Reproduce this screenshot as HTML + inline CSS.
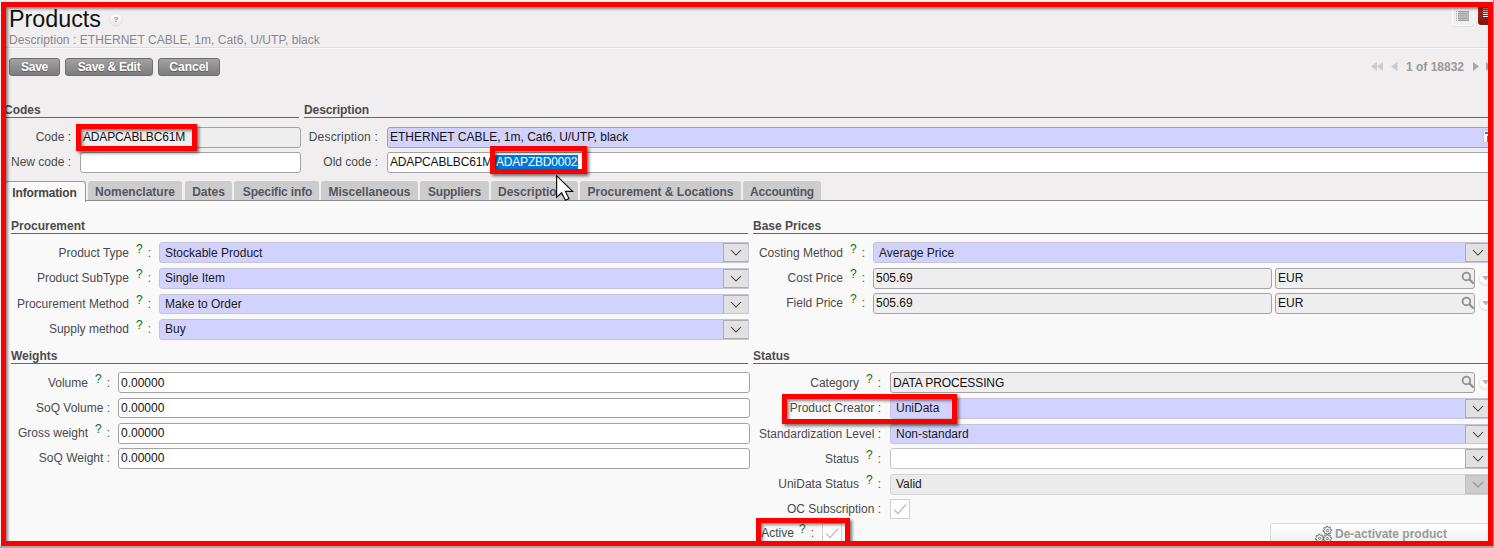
<!DOCTYPE html>
<html>
<head>
<meta charset="utf-8">
<title>Products</title>
<style>
html,body{margin:0;padding:0;}
body{width:1494px;height:548px;overflow:hidden;position:relative;background:#f0eeee;font-family:"Liberation Sans",Arial,sans-serif;font-size:12px;color:#4a4a4a;}
.abs,.abs *{box-sizing:border-box;}
.abs{position:absolute;}
#outer-top{left:0;top:0;width:1494px;height:2px;background:#f4f4f4;}
#panel{left:0;top:201px;width:1494px;height:347px;background:#f9f9f9;}
h1{position:absolute;left:9px;top:5px;margin:0;font-size:23.3px;font-weight:normal;color:#111;line-height:28px;letter-spacing:0;}
.sub{left:9px;top:33px;color:#8a8590;line-height:14px;white-space:nowrap;letter-spacing:0.05px;}
.hr1{left:0;top:47px;width:1494px;height:1px;background:#dedcdc;}
.hr1b{left:0;top:48px;width:1494px;height:1px;background:#f8f7f7;}
.btn{height:18px;border:1px solid #6e6e6e;border-radius:3px;background:linear-gradient(#a2a2a2,#7d7d7d);color:#fff;font-weight:bold;text-align:center;line-height:16px;text-shadow:0 1px 1px #555;}
.sec{font-weight:bold;color:#4c4c4c;line-height:14px;white-space:nowrap;}
.ln{height:1px;background:#666;}
.lbl{text-align:right;line-height:20px;height:20px;white-space:nowrap;color:#4a4a4a;}
.q{color:#0b6d0b;position:relative;top:-4px;margin:0 5px 0 7px;font-size:12px;}
.inp{height:21px;border:1px solid #a3a3a3;border-radius:3px;background:#fff;color:#111;line-height:19px;padding-left:2px;white-space:nowrap;overflow:hidden;}
.ro{background:#eee;}
.req{background:#d2d2ff;}
.sel{height:21px;border-radius:3px 0 0 3px;border:1px solid #c4c4c4;background:#fff;color:#1a1a1a;line-height:19px;padding-left:5px;white-space:nowrap;overflow:hidden;}
.sel.req{background:#d2d2ff;border-color:#c4c4d4;}
.sel.dis{background:#ebebeb;border-color:#d4d4d4;}
.sel .ar{position:absolute;right:-1px;top:0;width:26px;height:19px;background:#e1e1e1;border:1px solid #adadad;}
.sel.dis .ar{background:#cccccc;border-color:#bfbfbf;}
.sel .ar svg{position:absolute;left:6px;top:5px;}
.tab{top:181px;height:19px;background:#cccccc;border-radius:3px 3px 0 0;font-weight:bold;color:#55555f;line-height:22px;text-align:center;white-space:nowrap;}
.tab.act{top:181px;height:21px;background:#f9f9f9;border:1px solid #9a9a9a;border-bottom:none;color:#444;line-height:23px;}
.redbox{border:5px solid #ff0000;box-shadow:2px 2px 3px rgba(0,0,0,.55), inset 2px 2px 3px rgba(0,0,0,.45);}
.chk{width:20px;height:20px;border:1px solid #cfcfcf;background:#fff;}
.mag{width:12px;height:12px;}
.rb{width:13px;height:13px;border-radius:7px;background:#fdfdfd;border:1px solid #ececec;box-shadow:0 1px 1px #ddd;}
</style>
</head>
<body>
<div class="abs" id="panel"></div>

<!-- header -->
<h1>Products</h1>
<div class="abs" style="left:109px;top:13px;width:14px;height:14px;border-radius:7px;background:linear-gradient(#ffffff,#e2e2e2);border:1px solid #e4e4e4;color:#8f8f8f;font-size:8px;font-weight:bold;line-height:12px;text-align:center;">?</div>
<div class="abs sub">Description : ETHERNET CABLE, 1m, Cat6, U/UTP, black</div>
<div class="abs hr1"></div><div class="abs hr1b"></div>

<div class="abs btn" style="left:9px;top:58px;width:51px;letter-spacing:-0.3px;">Save</div>
<div class="abs btn" style="left:65px;top:58px;width:88px;letter-spacing:-0.3px;">Save &amp; Edit</div>
<div class="abs btn" style="left:158px;top:58px;width:62px;">Cancel</div>

<!-- view switcher -->
<div class="abs" style="left:1452px;top:5px;width:22px;height:21px;border-radius:3px;background:#efefef;border:1px solid #fafafa;box-shadow:0 1px 0 #e0e0e0;">
<svg width="14" height="10" style="position:absolute;left:3px;top:5px;" viewBox="0 0 14 10"><g fill="#9a9a9a"><rect x="0" y="0" width="1" height="1"/><rect x="2" y="0" width="11" height="1"/><rect x="0" y="2.2" width="1" height="1"/><rect x="2" y="2.2" width="11" height="1"/><rect x="0" y="4.5" width="1" height="1"/><rect x="2" y="4.5" width="11" height="1"/><rect x="0" y="6.8" width="1" height="1"/><rect x="2" y="6.8" width="11" height="1"/><rect x="0" y="9" width="1" height="1"/><rect x="2" y="9" width="11" height="1"/><rect x="2" y="1" width="11" height="8" opacity=".45"/></g></svg>
</div>
<div class="abs" style="left:1478px;top:5px;width:22px;height:20px;border-radius:3px 0 0 3px;background:linear-gradient(#a82c20,#7a1810);box-shadow:0 1px 0 #fff;">
<svg width="10" height="10" style="position:absolute;left:5px;top:3px;" viewBox="0 0 10 10"><g fill="#fff"><rect x="0" y="0" width="10" height="1" opacity=".45"/><rect x="0" y="2" width="10" height="1" opacity=".55"/><rect x="0" y="4" width="10" height="1" opacity=".75"/><rect x="0" y="6" width="10" height="1" opacity=".9"/><rect x="0" y="8" width="10" height="1"/></g></svg>
</div>

<!-- pager -->
<svg class="abs" style="left:1371px;top:61px;" width="120" height="12" viewBox="0 0 120 12">
<g fill="#cbcbcb"><polygon points="0,5.5 6,1 6,10"/><polygon points="6,5.5 12,1 12,10"/><polygon points="20,5.5 26.5,1 26.5,10"/></g>
<g fill="#a8a8a8"><polygon points="102,1 108,5.5 102,10"/><polygon points="115,1 121,5.5 115,10"/></g>
</svg>
<div class="abs" style="left:1406px;top:60px;font-weight:bold;color:#9a9a9a;line-height:14px;white-space:nowrap;">1 of 18832</div>

<!-- Codes / Description sections -->
<div class="abs sec" style="left:4px;top:103px;">Codes</div>
<div class="abs ln" style="left:0;top:117px;width:299px;"></div>
<div class="abs sec" style="left:304px;top:103px;letter-spacing:-0.1px;">Description</div>
<div class="abs ln" style="left:304px;top:117px;width:1190px;"></div>

<div class="abs lbl" style="left:0;top:127px;width:71px;">Code :</div>
<div class="abs inp ro" style="left:80px;top:127px;width:221px;letter-spacing:-0.15px;">ADAPCABLBC61M</div>
<div class="abs lbl" style="left:0;top:152px;width:71px;">New code :</div>
<div class="abs inp" style="left:80px;top:152px;width:221px;"></div>

<div class="abs lbl" style="left:296px;top:127px;width:82px;letter-spacing:0.2px;">Description :</div>
<div class="abs inp req" style="left:387px;top:127px;width:1110px;">ETHERNET CABLE, 1m, Cat6, U/UTP, black</div>
<div class="abs lbl" style="left:300px;top:152px;width:78px;">Old code :</div>
<div class="abs inp" style="left:387px;top:152px;width:1110px;"><span style="letter-spacing:-0.15px;">ADAPCABLBC61M</span></div>
<div class="abs" style="left:495px;top:155px;width:83px;height:15px;background:#0078d7;color:#fff;line-height:15px;padding-left:1px;letter-spacing:-0.2px;white-space:nowrap;overflow:hidden;color:#fff;">ADAPZBD0002</div>

<div class="abs" style="left:1483px;top:130px;width:10px;height:13px;background:#fafafa;border:1px solid #c8c8c8;border-radius:1px;"></div><div class="abs" style="left:1485px;top:132px;width:6px;height:2px;background:#3a78c8;"></div><div class="abs" style="left:1487px;top:136px;width:4px;height:6px;background:#4a80c8;"></div>
<!-- tabs -->
<div class="abs" style="left:0;top:200px;width:1494px;height:1px;background:#8e8e8e;"></div>
<div class="abs tab act" style="left:5px;width:81px;letter-spacing:-0.15px;padding-right:2px;">Information</div>
<div class="abs tab" style="left:88px;width:94px;">Nomenclature</div>
<div class="abs tab" style="left:185px;width:47px;">Dates</div>
<div class="abs tab" style="left:234px;width:85px;letter-spacing:-0.15px;padding-left:2px;">Specific info</div>
<div class="abs tab" style="left:321px;width:97px;">Miscellaneous</div>
<div class="abs tab" style="left:420px;width:69px;letter-spacing:-0.2px;">Suppliers</div>
<div class="abs tab" style="left:491px;width:87px;text-align:left;padding-left:7px;">Description</div>
<div class="abs tab" style="left:580px;width:161px;">Procurement &amp; Locations</div>
<div class="abs tab" style="left:743px;width:78px;letter-spacing:-0.2px;">Accounting</div>

<!-- Procurement -->
<div class="abs sec" style="left:11px;top:219px;">Procurement</div>
<div class="abs ln" style="left:11px;top:233px;width:737px;"></div>

<div class="abs lbl" style="left:0;top:243px;width:151px;">Product Type<span class="q">?</span>:</div>
<div class="abs sel req" style="left:159px;top:242px;width:590px;line-height:21px;">Stockable Product<div class="ar"><svg width="12" height="7" viewBox="0 0 12 7"><path d="M1 1 L6 6 L11 1" fill="none" stroke="#3a3a3a" stroke-width="1.05"/></svg></div></div>
<div class="abs lbl" style="left:0;top:268px;width:151px;">Product SubType<span class="q">?</span>:</div>
<div class="abs sel req" style="left:159px;top:268px;width:590px;">Single Item<div class="ar"><svg width="12" height="7" viewBox="0 0 12 7"><path d="M1 1 L6 6 L11 1" fill="none" stroke="#3a3a3a" stroke-width="1.05"/></svg></div></div>
<div class="abs lbl" style="left:0;top:294px;width:151px;">Procurement Method<span class="q">?</span>:</div>
<div class="abs sel req" style="left:159px;top:294px;width:590px;height:20px;line-height:18px;">Make to Order<div class="ar"><svg width="12" height="7" viewBox="0 0 12 7"><path d="M1 1 L6 6 L11 1" fill="none" stroke="#3a3a3a" stroke-width="1.05"/></svg></div></div>
<div class="abs lbl" style="left:0;top:319px;width:151px;">Supply method<span class="q">?</span>:</div>
<div class="abs sel req" style="left:159px;top:319px;width:590px;">Buy<div class="ar"><svg width="12" height="7" viewBox="0 0 12 7"><path d="M1 1 L6 6 L11 1" fill="none" stroke="#3a3a3a" stroke-width="1.05"/></svg></div></div>

<!-- Weights -->
<div class="abs sec" style="left:11px;top:349px;">Weights</div>
<div class="abs ln" style="left:11px;top:363px;width:737px;"></div>
<div class="abs lbl" style="left:0;top:373px;width:110px;">Volume<span class="q">?</span>:</div>
<div class="abs inp" style="left:118px;top:372px;width:632px;line-height:21px;">0.00000</div>
<div class="abs lbl" style="left:0;top:398px;width:110px;">SoQ Volume :</div>
<div class="abs inp" style="left:118px;top:398px;width:632px;height:20px;line-height:18px;">0.00000</div>
<div class="abs lbl" style="left:0;top:423px;width:110px;">Gross weight<span class="q">?</span>:</div>
<div class="abs inp" style="left:118px;top:423px;width:632px;">0.00000</div>
<div class="abs lbl" style="left:0;top:448px;width:110px;">SoQ Weight :</div>
<div class="abs inp" style="left:118px;top:448px;width:632px;">0.00000</div>

<!-- Base Prices -->
<div class="abs sec" style="left:753px;top:219px;">Base Prices</div>
<div class="abs ln" style="left:753px;top:233px;width:741px;"></div>
<div class="abs lbl" style="left:700px;top:243px;width:165px;">Costing Method<span class="q">?</span>:</div>
<div class="abs sel req" style="left:873px;top:242px;width:618px;line-height:21px;">Average Price<div class="ar"><svg width="12" height="7" viewBox="0 0 12 7"><path d="M1 1 L6 6 L11 1" fill="none" stroke="#3a3a3a" stroke-width="1.05"/></svg></div></div>
<div class="abs lbl" style="left:700px;top:268px;width:165px;">Cost Price<span class="q">?</span>:</div>
<div class="abs inp ro" style="left:873px;top:268px;width:399px;">505.69</div>
<div class="abs inp ro" style="left:1275px;top:268px;width:200px;">EUR</div>
<div class="abs lbl" style="left:700px;top:293px;width:165px;">Field Price<span class="q">?</span>:</div>
<div class="abs inp ro" style="left:873px;top:293px;width:399px;">505.69</div>
<div class="abs inp ro" style="left:1275px;top:293px;width:200px;">EUR</div>

<!-- Status -->
<div class="abs sec" style="left:753px;top:349px;">Status</div>
<div class="abs ln" style="left:753px;top:363px;width:741px;"></div>
<div class="abs lbl" style="left:700px;top:373px;width:181px;">Category<span class="q">?</span>:</div>
<div class="abs inp ro" style="left:890px;top:372px;width:585px;line-height:21px;letter-spacing:-0.12px;">DATA PROCESSING</div>
<div class="abs lbl" style="left:700px;top:398px;width:181px;">Product Creator :</div>
<div class="abs sel req" style="left:890px;top:398px;width:601px;">UniData<div class="ar"><svg width="12" height="7" viewBox="0 0 12 7"><path d="M1 1 L6 6 L11 1" fill="none" stroke="#3a3a3a" stroke-width="1.05"/></svg></div></div>
<div class="abs lbl" style="left:700px;top:424px;width:181px;">Standardization Level :</div>
<div class="abs sel req" style="left:890px;top:424px;width:601px;height:20px;line-height:18px;">Non-standard<div class="ar"><svg width="12" height="7" viewBox="0 0 12 7"><path d="M1 1 L6 6 L11 1" fill="none" stroke="#3a3a3a" stroke-width="1.05"/></svg></div></div>
<div class="abs lbl" style="left:700px;top:449px;width:181px;">Status<span class="q">?</span>:</div>
<div class="abs sel" style="left:890px;top:448px;width:601px;"><div class="ar"><svg width="12" height="7" viewBox="0 0 12 7"><path d="M1 1 L6 6 L11 1" fill="none" stroke="#3a3a3a" stroke-width="1.05"/></svg></div></div>
<div class="abs lbl" style="left:700px;top:474px;width:181px;">UniData Status<span class="q">?</span>:</div>
<div class="abs sel dis" style="left:890px;top:474px;width:601px;">Valid<div class="ar"><svg width="12" height="7" viewBox="0 0 12 7"><path d="M1 1 L6 6 L11 1" fill="none" stroke="#9a9a9a" stroke-width="1.3"/></svg></div></div>
<div class="abs lbl" style="left:700px;top:499px;width:181px;">OC Subscription :</div>
<div class="abs chk" style="left:890px;top:499px;"><svg width="18" height="18" viewBox="0 0 18 18"><path d="M3 9.5 L7 13.5 L15 4.5" fill="none" stroke="#c6c6c6" stroke-width="1.6"/></svg></div>
<div class="abs lbl" style="left:700px;top:523px;width:114px;">Active<span class="q" style="margin-left:5px;">?</span>:</div>
<div class="abs chk" style="left:822px;top:523px;"><svg width="18" height="18" viewBox="0 0 18 18"><path d="M3 9.5 L7 13.5 L15 4.5" fill="none" stroke="#c6c6c6" stroke-width="1.6"/></svg></div>


<!-- m2o icons -->
<svg class="abs" style="left:1460.5px;top:270.5px;" width="14" height="14" viewBox="0 0 14 14"><circle cx="5.4" cy="5.4" r="3.8" fill="none" stroke="#939393" stroke-width="1.9"/><path d="M8.4 8.4 L12 12" stroke="#939393" stroke-width="2.2" stroke-linecap="round"/></svg><div class="abs rb" style="left:1479px;top:272px;"></div><svg class="abs" style="left:1482px;top:276px;" width="8" height="5" viewBox="0 0 8 5"><polygon points="0,0 7.4,0 3.7,4.6" fill="#b4b4b4"/></svg>
<svg class="abs" style="left:1460.5px;top:295.5px;" width="14" height="14" viewBox="0 0 14 14"><circle cx="5.4" cy="5.4" r="3.8" fill="none" stroke="#939393" stroke-width="1.9"/><path d="M8.4 8.4 L12 12" stroke="#939393" stroke-width="2.2" stroke-linecap="round"/></svg><div class="abs rb" style="left:1479px;top:297px;"></div><svg class="abs" style="left:1482px;top:301px;" width="8" height="5" viewBox="0 0 8 5"><polygon points="0,0 7.4,0 3.7,4.6" fill="#b4b4b4"/></svg>
<svg class="abs" style="left:1460.5px;top:374.5px;" width="14" height="14" viewBox="0 0 14 14"><circle cx="5.4" cy="5.4" r="3.8" fill="none" stroke="#939393" stroke-width="1.9"/><path d="M8.4 8.4 L12 12" stroke="#939393" stroke-width="2.2" stroke-linecap="round"/></svg><div class="abs rb" style="left:1479px;top:376px;"></div><svg class="abs" style="left:1482px;top:380px;" width="8" height="5" viewBox="0 0 8 5"><polygon points="0,0 7.4,0 3.7,4.6" fill="#b4b4b4"/></svg>
<!-- de-activate button -->
<div class="abs" style="left:1270px;top:523px;width:230px;height:24px;border:1px solid #dcdcdc;border-radius:3px;background:linear-gradient(#ffffff,#ededed);"></div>
<div class="abs" style="left:1335px;top:527px;font-weight:bold;color:#9a9a9a;line-height:14px;white-space:nowrap;">De-activate product</div>

<svg class="abs" style="left:1313px;top:524px;" width="22" height="22" viewBox="0 0 22 22"><polygon points="10.92,13.54 11.00,14.40 9.64,15.00 9.46,15.59 10.26,16.84 9.71,17.51 8.32,16.98 7.79,17.26 7.46,18.72 6.60,18.80 6.00,17.44 5.41,17.26 4.16,18.06 3.49,17.51 4.02,16.12 3.74,15.59 2.28,15.26 2.20,14.40 3.56,13.80 3.74,13.21 2.94,11.96 3.49,11.29 4.88,11.82 5.41,11.54 5.74,10.08 6.60,10.00 7.20,11.36 7.79,11.54 9.04,10.74 9.71,11.29 9.18,12.68 9.46,13.21" fill="#fdfdfd" stroke="#5e5e5e" stroke-width="0.9" stroke-linejoin="round"/><circle cx="6.6" cy="14.4" r="1.2" fill="#e8e8e8" stroke="#666" stroke-width="0.8"/><polygon points="18.72,13.74 18.80,14.60 17.44,15.20 17.26,15.79 18.06,17.04 17.51,17.71 16.12,17.18 15.59,17.46 15.26,18.92 14.40,19.00 13.80,17.64 13.21,17.46 11.96,18.26 11.29,17.71 11.82,16.32 11.54,15.79 10.08,15.46 10.00,14.60 11.36,14.00 11.54,13.41 10.74,12.16 11.29,11.49 12.68,12.02 13.21,11.74 13.54,10.28 14.40,10.20 15.00,11.56 15.59,11.74 16.84,10.94 17.51,11.49 16.98,12.88 17.26,13.41" fill="#fdfdfd" stroke="#5e5e5e" stroke-width="0.9" stroke-linejoin="round"/><circle cx="14.4" cy="14.6" r="1.2" fill="#e8e8e8" stroke="#666" stroke-width="0.8"/><polygon points="18.72,5.54 18.80,6.40 17.44,7.00 17.26,7.59 18.06,8.84 17.51,9.51 16.12,8.98 15.59,9.26 15.26,10.72 14.40,10.80 13.80,9.44 13.21,9.26 11.96,10.06 11.29,9.51 11.82,8.12 11.54,7.59 10.08,7.26 10.00,6.40 11.36,5.80 11.54,5.21 10.74,3.96 11.29,3.29 12.68,3.82 13.21,3.54 13.54,2.08 14.40,2.00 15.00,3.36 15.59,3.54 16.84,2.74 17.51,3.29 16.98,4.68 17.26,5.21" fill="#fdfdfd" stroke="#5e5e5e" stroke-width="0.9" stroke-linejoin="round"/><circle cx="14.4" cy="6.4" r="1.2" fill="#e8e8e8" stroke="#666" stroke-width="0.8"/></svg>
<div class="abs" style="left:0;top:0;width:1494px;height:2px;background:#f3f6f6;"></div><div class="abs" style="left:0;top:0;width:1px;height:548px;background:#f5fafa;"></div>
<!-- red annotations -->
<div class="abs redbox" style="left:76px;top:124px;width:121px;height:27px;"></div>
<div class="abs redbox" style="left:490px;top:146px;width:97px;height:28px;"></div>
<div class="abs redbox" style="left:782px;top:394px;width:175px;height:30px;"></div>
<div class="abs redbox" style="left:756px;top:518px;width:94px;height:28px;"></div>
<div class="abs redbox" style="left:1px;top:2px;width:1492px;height:544px;"></div>
<div class="abs" style="left:1493px;top:0;width:1px;height:548px;background:#8a8a8a;"></div>
<div class="abs" style="left:0;top:546px;width:1494px;height:2px;background:#a8a8a8;"></div>

<!-- cursor -->
<svg class="abs" style="left:555px;top:173px;" width="22" height="30" viewBox="0 0 22 30"><polygon points="1.6,2.6 1.6,24.2 6.6,19.8 10.4,27.2 14,25.6 10.4,18.4 17.6,18.4" fill="#fff" stroke="#111" stroke-width="1.2" stroke-linejoin="miter"/></svg>
</body>
</html>
